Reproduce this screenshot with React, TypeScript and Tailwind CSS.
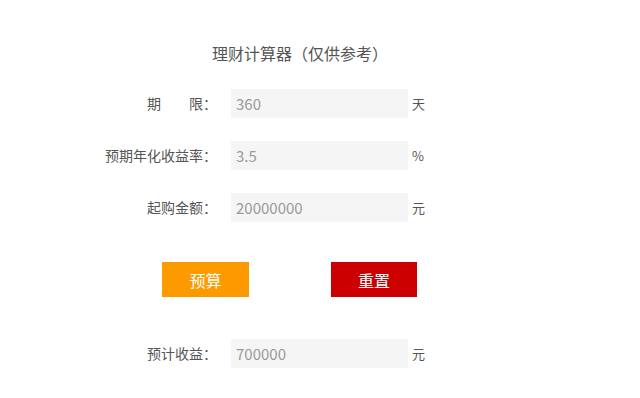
import { useState } from 'react'

type Field = {
  key: string
  label: string
  unit: string
}

const FIELDS: Field[] = [
  { key: 'days', label: '期　　限：', unit: '天' },
  { key: 'rate', label: '预期年化收益率：', unit: '%' },
  { key: 'amount', label: '起购金额：', unit: '元' },
]

function Row({ label, value, unit, onChange }: { label: string; value: string; unit: string; onChange?: (v: string) => void }) {
  return (
    <div className="flex items-center h-[29px]">
      <span className="w-[217px] text-right text-[14px] text-[#555]">{label}</span>
      <input
        value={value}
        onChange={(e) => onChange?.(e.target.value)}
        className="ml-[14px] w-[177px] h-[29px] bg-[#f5f5f5] px-[5px] text-[15px] text-[#999] outline-none"
      />
      <span className="ml-[4px] text-[13px] text-[#555]">{unit}</span>
    </div>
  )
}

export default function App() {
  const [vals, setVals] = useState<Record<string, string>>({ days: '360', rate: '3.5', amount: '20000000' })
  const [result, setResult] = useState('700000')

  function calc() {
    const r = (Number(vals.amount) * Number(vals.rate) / 100) * Number(vals.days) / 360
    setResult(String(Math.round(r)))
  }

  return (
    <main className="w-[640px] h-[398px] bg-white" style={{ fontFamily: '"Noto Sans CJK SC", "Microsoft YaHei", sans-serif' }}>
      <h1 className="pt-[43px] pl-[212px] text-[16px] leading-[20px] text-[#555]">理财计算器（仅供参考）</h1>

      {/* 表单 */}
      <div className="mt-[26px] flex flex-col gap-[23px]">
        {FIELDS.map((f) => (
          <Row key={f.key} label={f.label} unit={f.unit} value={vals[f.key]}
            onChange={(v) => setVals((s) => ({ ...s, [f.key]: v }))} />
        ))}
      </div>

      {/* 按钮 */}
      <div className="mt-[40px] flex h-[35px]">
        <button onClick={calc} className="ml-[162px] w-[87px] h-[35px] bg-[#fd9a00] text-white text-[16px]">预算</button>
        <button onClick={() => setResult('')} className="ml-[82px] w-[86px] h-[35px] bg-[#cc0000] text-white text-[16px]">重置</button>
      </div>

      <div className="mt-[42px]">
        <Row label="预计收益：" value={result} unit="元" />
      </div>
    </main>
  )
}
